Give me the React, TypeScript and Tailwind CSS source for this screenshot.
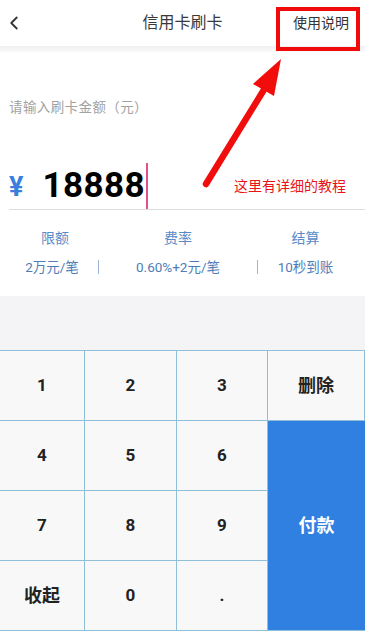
import React from 'react';
import { ChevronLeft } from 'lucide-react';

const font = { fontFamily: 'Roboto, "Noto Sans CJK SC", sans-serif' };

const keys: { label: string; cls?: string }[] = [
  { label: '1' }, { label: '2' }, { label: '3' }, { label: '删除', cls: 'text-[18px]' },
  { label: '4' }, { label: '5' }, { label: '6' },
  { label: '7' }, { label: '8' }, { label: '9' },
  { label: '收起', cls: 'text-[18px]' }, { label: '0' }, { label: '.' },
];

const Key: React.FC<{ label: string; cls?: string }> = ({ label, cls }) => (
  <div className={`flex items-center justify-center bg-[#f8f8f9] border-r border-b border-[#8fbfd9] font-bold text-[#222] ${cls ?? 'text-[17px]'}`}>
    {label}
  </div>
);

export default function App() {
  return (
    <div className="relative w-[365px] h-[634px] bg-white overflow-hidden" style={font}>
      {/* header */}
      <div className="relative h-[46px] flex items-center bg-white">
        <ChevronLeft size={22} strokeWidth={2} className="ml-[3px] text-[#333]" />
        <span className="absolute left-0 right-0 text-center text-[16px] text-[#3a3a3a] pointer-events-none">信用卡刷卡</span>
        <span className="ml-auto mr-[16px] text-[14px] text-[#333]">使用说明</span>
      </div>
      <div className="h-[6px] bg-gradient-to-b from-[#f1f1f3] to-[#fafafa]" />

      {/* amount */}
      <div className="pl-[9px]">
        <div className="mt-[46px] text-[13.5px] leading-[18px] text-[#a2a2a2] tracking-[0.4px]">请输入刷卡金额（元）</div>
        <div className="mt-[46px] h-[48px] flex items-center border-b border-[#dcdcdc]">
          <span className="text-[27px] font-bold text-[#3a7fdc] leading-none mt-[4px]">¥</span>
          <span className="ml-[19px] text-[35px] font-bold text-black leading-none tracking-[0.4px]">18888</span>
          <span className="ml-[1px] w-[2px] h-[46px] bg-[#e4508a]" />
          <span className="ml-auto mr-[19px] mt-[2px] text-[14px] text-[#e8141a]">这里有详细的教程</span>
        </div>
      </div>

      {/* stats */}
      <div className="grid grid-cols-[110px_136px_1fr] mt-[19px] text-[14px] leading-[18px] text-[#5b8bc6] text-center">
        <span>限额</span>
        <span>费率</span>
        <span>结算</span>
      </div>
      <div className="grid grid-cols-[98px_1px_158px_1px_1fr] items-center mt-[11px] pb-[20px] text-[13.5px] leading-[18px] text-[#4f7db8] text-center">
        <span className="pl-[6px]">2万元/笔</span>
        <span className="h-[14px] bg-[#9db4d0]" />
        <span>0.60%+2元/笔</span>
        <span className="h-[14px] bg-[#9db4d0]" />
        <span className="pr-[12px]">10秒到账</span>
      </div>

      <div className="h-[54px] bg-[#f4f4f6]" />

      {/* keypad */}
      <div className="grid grid-cols-[85px_92px_91px_1fr] grid-rows-[70px_70px_70px_70px] border-t border-[#8fbfd9]">
        {keys.slice(0, 4).map(k => <Key key={k.label} {...k} />)}
        {keys.slice(4, 7).map(k => <Key key={k.label} {...k} />)}
        <div className="row-span-3 flex items-center justify-center bg-[#2f80e1] text-white font-bold text-[18px] border-b border-[#8fbfd9]">
          付款
        </div>
        {keys.slice(7).map(k => <Key key={k.label} {...k} />)}
      </div>

      {/* annotation overlay */}
      <div className="absolute left-[276px] top-[7px] w-[84px] h-[44px] border-[4px] border-[#f00a0a]" />
      <svg className="absolute left-0 top-0 pointer-events-none" width="365" height="634">
        <line x1="206" y1="184" x2="265" y2="88" stroke="#f20d0d" strokeWidth="6.5" strokeLinecap="round" />
        <polygon points="281,59 253,84 274,96" fill="#f20d0d" />
      </svg>
    </div>
  );
}
